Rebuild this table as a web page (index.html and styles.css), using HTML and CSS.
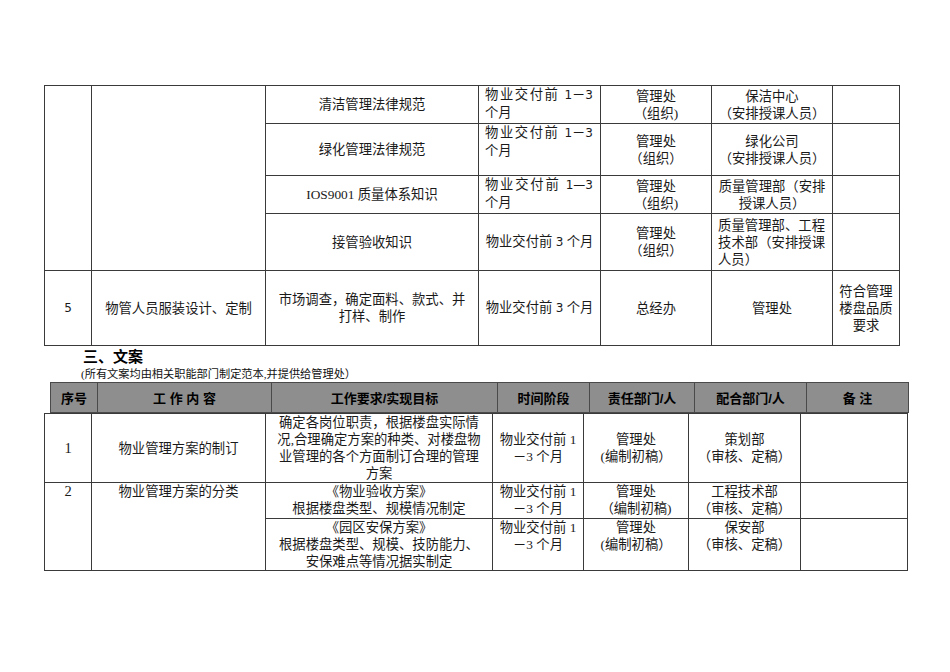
FILE: index.html
```html
<!DOCTYPE html>
<html lang="zh">
<head>
<meta charset="utf-8">
<title>文案</title>
<link rel="stylesheet" href="styles.css">
</head>
<body>
<div class="page">
  <table class="grid t1">
    <colgroup>
      <col class="w47"><col class="w174"><col class="w213"><col class="w122"><col class="w111"><col class="w121"><col class="w67">
    </colgroup>
    <tr class="h38">
      <td rowspan="4"></td>
      <td rowspan="4"></td>
      <td>清洁管理法律规范</td>
      <td class="just top">物业交付前 <span class="num">1</span>－<span class="num">3</span> 个月</td>
      <td>管理处<br>（组织)</td>
      <td>保洁中心<br>（安排授课人员）</td>
      <td></td>
    </tr>
    <tr class="h52">
      <td>绿化管理法律规范</td>
      <td class="just top">物业交付前 <span class="num">1</span>－<span class="num">3</span> 个月</td>
      <td>管理处<br>（组织）</td>
      <td>绿化公司<br>（安排授课人员）</td>
      <td></td>
    </tr>
    <tr class="h38">
      <td>IOS9001 质量体系知识</td>
      <td class="just top">物业交付前 <span class="num">1—3</span> 个月</td>
      <td>管理处<br>（组织)</td>
      <td>质量管理部（安排授课人员）</td>
      <td></td>
    </tr>
    <tr class="h57">
      <td>接管验收知识</td>
      <td>物业交付前 <span class="num">3</span> 个月</td>
      <td>管理处<br>（组织）</td>
      <td class="just">质量管理部、工程技术部（安排授课人员）</td>
      <td></td>
    </tr>
    <tr class="h75">
      <td class="num">5</td>
      <td>物管人员服装设计、定制</td>
      <td class="wide">市场调查，确定面料、款式、并打样、制作</td>
      <td>物业交付前 <span class="num">3</span> 个月</td>
      <td>总经办</td>
      <td>管理处</td>
      <td class="tight">符合管理楼盘品质要求</td>
    </tr>
  </table>

  <h2 class="heading">三、文案</h2>
  <p class="note">(所有文案均由相关职能部门制定范本,并提供给管理处）</p>

  <table class="head">
    <colgroup>
      <col class="w47"><col class="w174"><col class="w226"><col class="w92"><col class="w105"><col class="w112"><col class="w102">
    </colgroup>
    <tr>
      <th>序号</th>
      <th>工 作 内 容</th>
      <th>工作要求/实现目标</th>
      <th>时间阶段</th>
      <th>责任部门/人</th>
      <th>配合部门/人</th>
      <th>备 注</th>
    </tr>
  </table>

  <table class="grid t2">
    <colgroup>
      <col class="w47"><col class="w174"><col class="w227"><col class="w91"><col class="w105"><col class="w112"><col class="w107">
    </colgroup>
    <tr class="h71">
      <td class="idx">1</td>
      <td>物业管理方案的制订</td>
      <td class="wide">确定各岗位职责，根据楼盘实际情况,合理确定方案的种类、对楼盘物业管理的各个方面制订合理的管理方案</td>
      <td class="time">物业交付前 1<br>－3 个月</td>
      <td>管理处<br>(编制初稿）</td>
      <td>策划部<br>（审核、定稿）</td>
      <td></td>
    </tr>
    <tr class="h36 top">
      <td rowspan="2" class="idx">2</td>
      <td rowspan="2">物业管理方案的分类</td>
      <td class="wide">《物业验收方案》<br>根据楼盘类型、规模情况制定</td>
      <td class="time">物业交付前 1<br>－3 个月</td>
      <td>管理处<br>（编制初稿)</td>
      <td>工程技术部<br>（审核、定稿）</td>
      <td></td>
    </tr>
    <tr class="h51 top">
      <td class="wide">《园区安保方案》<br>根据楼盘类型、规模、技防能力、安保难点等情况据实制定</td>
      <td class="time">物业交付前 1<br>－3 个月</td>
      <td>管理处<br>(编制初稿）</td>
      <td>保安部<br>（审核、定稿）</td>
      <td></td>
    </tr>
  </table>
</div>
</body>
</html>
```

FILE: styles.css
```css
* { box-sizing: border-box; }
html, body { margin: 0; padding: 0; background: #fff; }
body {
  font-family: "Liberation Serif", "Noto Sans CJK SC", serif;
  color: #1a1a1a;
  width: 950px;
  height: 672px;
  overflow: hidden;
}
.page { padding: 85px 0 0 44px; }

table { border-collapse: collapse; table-layout: fixed; }
.grid td {
  border: 1px solid #3a3a3a;
  font-size: 13.33px;
  line-height: 17px;
  text-align: center;
  vertical-align: middle;
  padding: 0 6px;
  word-break: break-all;
}
.t1 { width: 856px; }
.t2 { width: 864px; }

.w47 { width: 47px; }
.w174 { width: 174px; }
.w213 { width: 213px; }
.w122 { width: 122px; }
.w111 { width: 111px; }
.w121 { width: 121px; }
.w67 { width: 67px; }
.w226 { width: 226px; }
.w227 { width: 227px; }
.w92 { width: 92px; }
.w91 { width: 91px; }
.w105 { width: 105px; }
.w112 { width: 112px; }
.w102 { width: 102px; }
.w107 { width: 107px; }

.h38 { height: 38px; }
.h52 { height: 52px; }
.h57 { height: 57px; }
.h75 { height: 75px; }
.h71 { height: 69px; }
.h36 { height: 36px; }
.h51 { height: 50px; }

.grid td.just { text-align: justify; text-justify: inter-character; padding: 0 7px 0 6px; }
.grid td.top, .grid tr.top td { vertical-align: top; }
.grid td.wide { padding: 0 9px; }
.t1 td.wide { padding: 0 12px; }
.grid td.tight { padding: 0 6px; }
.grid td.time { padding: 0 4px; white-space: nowrap; }
.grid td.idx { font-size: 14.5px; }
.num { font-family: "DejaVu Sans", sans-serif; font-size: 12px; }
.grid td.num { font-size: 12px; }

.heading {
  margin: 1px 0 0 39px;
  font-family: "Liberation Sans", "Noto Sans CJK SC", sans-serif;
  font-size: 15px;
  font-weight: bold;
  line-height: 20px;
  color: #000;
}
.note {
  margin: 0 0 1px 37px;
  font-size: 11.2px;
  line-height: 14px;
  color: #111;
}

.head {
  width: 859px;
  margin-left: 6px;
  background: #8e8e8e;
}
.head th {
  border: 1px solid #4a4a4a;
  height: 30px;
  padding: 0;
  font-family: "Liberation Sans", "Noto Sans CJK SC", sans-serif;
  font-size: 13px;
  font-weight: bold;
  color: #000;
  text-align: center;
  vertical-align: middle;
}
```
